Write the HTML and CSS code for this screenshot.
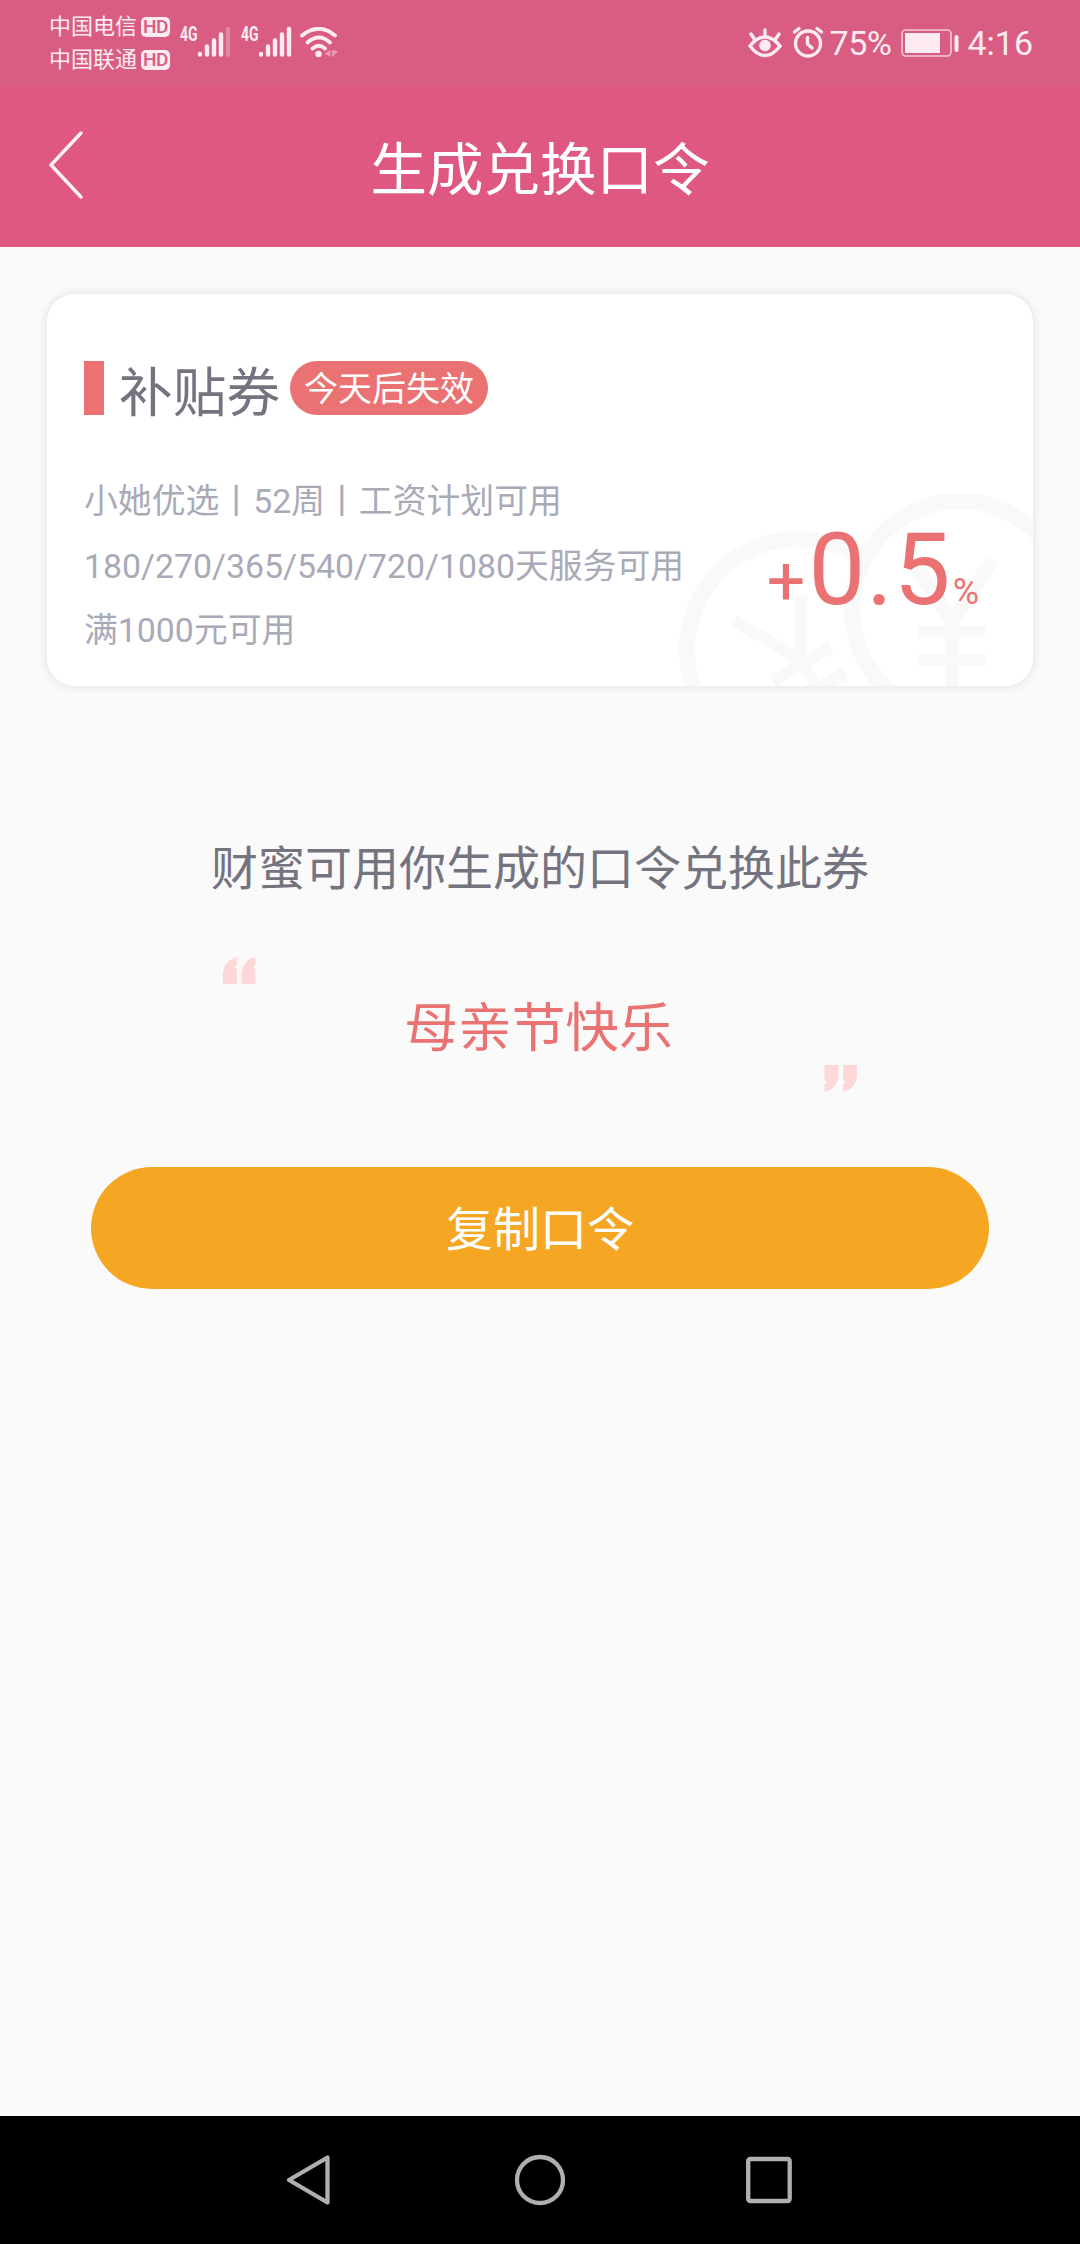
FILE: index.html
```html
<!DOCTYPE html>
<html lang="zh-CN">
<head>
<meta charset="utf-8">
<title>生成兑换口令</title>
<link rel="stylesheet" href="styles.css">
</head>
<body>
<div class="screen">
  <div class="status">
    <div class="carriers">
      <div class="carrier"><span>中国电信</span><b class="hd">HD</b></div>
      <div class="carrier"><span>中国联通</span><b class="hd">HD</b></div>
    </div>
    <div class="signal">
      <span class="net">4G</span>
      <svg class="bars" width="34" height="32" viewBox="0 0 34 32" stroke="#fdebf1" stroke-width="4.400" stroke-linecap="round"><path d="M3 28.500V28M10 28.500V20.500M17 28.500V14.500M24 28.500V8.500"/><path d="M31 28.500V3" opacity=".3"/></svg>
    </div>
    <div class="signal">
      <span class="net">4G</span>
      <svg class="bars" width="34" height="32" viewBox="0 0 34 32" stroke="#fdebf1" stroke-width="4.400" stroke-linecap="round"><path d="M3 28.500V28M10 28.500V20.500M17 28.500V14.500M24 28.500V8.500M31 28.500V3"/></svg>
    </div>
    <svg class="wifi" width="40" height="32" viewBox="0 0 40 32" fill="none" stroke="#fdebf1" stroke-width="3.800" stroke-linecap="round"><path d="M2 8.500Q19 -5 35 8.500M7.500 15.500Q19 5.500 30 15.500M12.500 21.500Q19 16 25 21.500"/><circle cx="18.500" cy="27" r="3.200" fill="#fdebf1" stroke="none"/><path d="M30.500 23v7l-6-3.500zM32 23v7l6-6z" fill="#fdebf1" stroke="none" opacity=".45"/></svg>
    <div class="status-right">
      <svg class="eye" width="34" height="32" viewBox="0 0 34 32" fill="none" stroke="#fdebf1" stroke-width="3.400" stroke-linecap="round"><path d="M2 19Q9 10 17 10T32 19Q25 28.500 17 28.500T2 19ZM17 9V3M6 11.500L3 7M28 11.500L31 7"/><circle cx="17" cy="18.500" r="5.800" fill="#fdebf1" stroke="none"/></svg>
      <svg class="alarm" width="32" height="32" viewBox="0 0 32 32" fill="none" stroke="#fdebf1" stroke-width="3.400" stroke-linecap="round" stroke-linejoin="round"><circle cx="16" cy="17.500" r="12.500"/><path d="M15.500 11.500V18L20 22M2.500 6L7 2.500M29.500 6L25 2.500"/></svg>
      <span class="percent">75%</span>
      <svg class="battery" width="60" height="30" viewBox="0 0 60 30"><rect x="2" y="2" width="49" height="26" rx="4" fill="none" stroke="#fdebf1" stroke-opacity=".75" stroke-width="1.600"/><rect x="5" y="5" width="35" height="20" fill="#fdebf1"/><rect x="54.500" y="7" width="4" height="17" rx="2" fill="#fdebf1"/></svg>
      <span class="clock">4:16</span>
    </div>
  </div>

  <header class="header">
    <svg class="back" width="40" height="72" viewBox="0 0 40 72" fill="none" stroke="#fff1f6" stroke-width="3.400" stroke-linecap="round" stroke-linejoin="round"><path d="M34 4L4 36L34 68"/></svg>
    <h1 class="title">生成兑换口令</h1>
  </header>

  <main class="content">
    <section class="coupon">
      <svg class="watermark" width="360" height="200" viewBox="673 486 360 200" fill="none" stroke="#f9f9f9" stroke-width="16">
        <circle cx="798" cy="650" r="111"/>
        <path d="M733 620L801 660M801 596V660L820 694M831 647L773 681M845 673L800 699" stroke-width="12"/>
        <circle cx="960" cy="609" r="108" fill="#fff"/>
        <path d="M912 560L952 622L992 560M952 618V700" stroke-width="14"/>
        <path d="M918 631H985M918 660H985" stroke-width="11"/>
      </svg>
      <div class="coupon-head">
        <i class="mark"></i>
        <h2 class="coupon-name">补贴券</h2>
        <span class="badge">今天后失效</span>
      </div>
      <div class="coupon-body">
        <div class="rules">
          <p>小她优选丨52周丨工资计划可用</p>
          <p>180/270/365/540/720/1080天服务可用</p>
          <p>满1000元可用</p>
        </div>
        <div class="rate"><span class="plus">+</span><span class="num">0.5</span><span class="unit">%</span></div>
      </div>
    </section>

    <p class="hint">财蜜可用你生成的口令兑换此券</p>
    <div class="phrase">
      <svg class="quote open" width="33" height="27" viewBox="0 0 33 27" fill="#fed8d8"><path id="q" d="M0 27V17Q1 3 14 0V8Q12 8.500 12 10.500L14 12V27ZM18.500 27V17Q19.500 3 32.500 0V8Q30.500 8.500 30.500 10.500L32.500 12V27Z"/></svg>
      <strong class="words">母亲节快乐</strong>
      <svg class="quote close" width="33" height="27" viewBox="0 0 33 27" fill="#fed8d8"><use href="#q" transform="rotate(180 16.500 13.500)"/></svg>
    </div>
    <button class="copy">复制口令</button>
  </main>

  <nav class="nav">
    <svg width="50" height="54" viewBox="0 0 50 54"><path d="M42.500 4.500V49.500L4 27Z"/></svg>
    <svg width="54" height="54" viewBox="0 0 54 54"><circle cx="27" cy="27" r="23"/></svg>
    <svg width="50" height="54" viewBox="0 0 50 54"><rect x="3.200" y="6" width="41.500" height="42" rx="2"/></svg>
  </nav>
</div>
</body>
</html>
```
FILE: styles.css
```css
* { box-sizing: border-box; margin: 0; padding: 0; }
body { background: #fafafa; font-family: Roboto, "Noto Sans CJK SC", sans-serif; }
svg { display: block; flex: none; }
.screen { width: 1080px; height: 2244px; display: flex; flex-direction: column; overflow: hidden; }

.status { height: 86px; background: #d95d82; color: #fdebf1; display: flex; align-items: flex-start; padding-left: 49px; }
.carriers { display: flex; flex-direction: column; padding-top: 10px; width: 131px; }
.carrier { height: 33px; display: flex; align-items: center; gap: 4px; font-size: 22px; line-height: 33px; white-space: nowrap; }
.hd { width: 29px; height: 20px; border-radius: 5px; background: #fdebf1; color: #d95d82; font-size: 19px; line-height: 20px; text-align: center; font-weight: 500; letter-spacing: -.5px; }
.signal { display: flex; width: 61px; padding-top: 26px; }
.net { width: 17px; font-size: 20px; line-height: 16px; font-weight: 700; transform: scaleX(.7); transform-origin: left; }
.wifi { margin: 27px 0 0 -2px; }
.status-right { margin-left: auto; display: flex; align-items: flex-start; padding-right: 47px; font-size: 34px; line-height: 40px; }
.eye { margin-top: 27px; }
.alarm { margin: 26px 0 0 10px; }
.percent { margin: 23px 0 0 5px; width: 65px; letter-spacing: -.3px; }
.battery { margin: 28px 0 0 6px; }
.clock { margin: 23px 0 0 7px; }

.header { height: 161px; background: #df5881; display: grid; grid-template-columns: 100px 1fr 100px; align-items: center; }
.back { margin: 0 0 4px 47px; }
.title { padding-top: 8px; color: #fff; font-size: 56.500px; font-weight: 400; line-height: 80px; text-align: center; }

.content { flex: 1; display: flex; flex-direction: column; align-items: center; padding-top: 47px; }
.coupon { position: relative; width: 986px; height: 392px; padding: 67px 37px 0; background: #fff; border-radius: 28px; box-shadow: 0 0 8px 2px rgba(0,0,0,.08); overflow: hidden; }
.watermark { position: absolute; right: 0; bottom: 0; }
.coupon-head { position: relative; height: 54px; display: flex; align-items: center; }
.mark { width: 20px; height: 54px; background: #eb7272; }
.coupon-name { margin-left: 15px; padding-top: 11px; width: 161px; font-size: 53.700px; line-height: 60px; font-weight: 400; color: #747480; white-space: nowrap; }
.badge { margin-left: 10px; width: 198px; height: 54px; border-radius: 27px; background: #eb7272; color: #fff; font-size: 34px; line-height: 57px; text-align: center; }
.coupon-body { position: relative; display: flex; justify-content: space-between; padding-top: 55px; }
.rules { font-size: 33.850px; color: #a9aab8; line-height: 64.500px; white-space: nowrap; }
.rate { color: #eb7272; white-space: nowrap; padding: 41px 17px 0 0; line-height: 118px; }
.plus { font-size: 68px; margin-right: 3px; }
.num { font-size: 101px; letter-spacing: 1px; margin-right: 1px; }
.unit { font-size: 36px; }

.hint { margin-top: 148px; font-size: 47px; line-height: 70px; color: #747480; }
.phrase { width: 634px; height: 135px; margin-top: 53px; display: grid; grid-template-columns: 33px 1fr 33px; }
.open { align-self: start; }
.close { align-self: end; }
.words { align-self: center; padding: 9px 3px 0 0; text-align: center; font-size: 53.700px; line-height: 70px; font-weight: 400; color: #eb7272; }
.copy { width: 898px; height: 122px; margin-top: 75px; padding-top: 3px; border: 0; border-radius: 61px; background: #f5a623; color: #fff; font: 47px/119px Roboto, "Noto Sans CJK SC", sans-serif; }

.nav { height: 128px; background: #000; display: flex; justify-content: center; align-items: center; gap: 178px; }
.nav svg { fill: none; stroke: #b0b0b0; stroke-width: 4.300; stroke-linejoin: round; }
```
